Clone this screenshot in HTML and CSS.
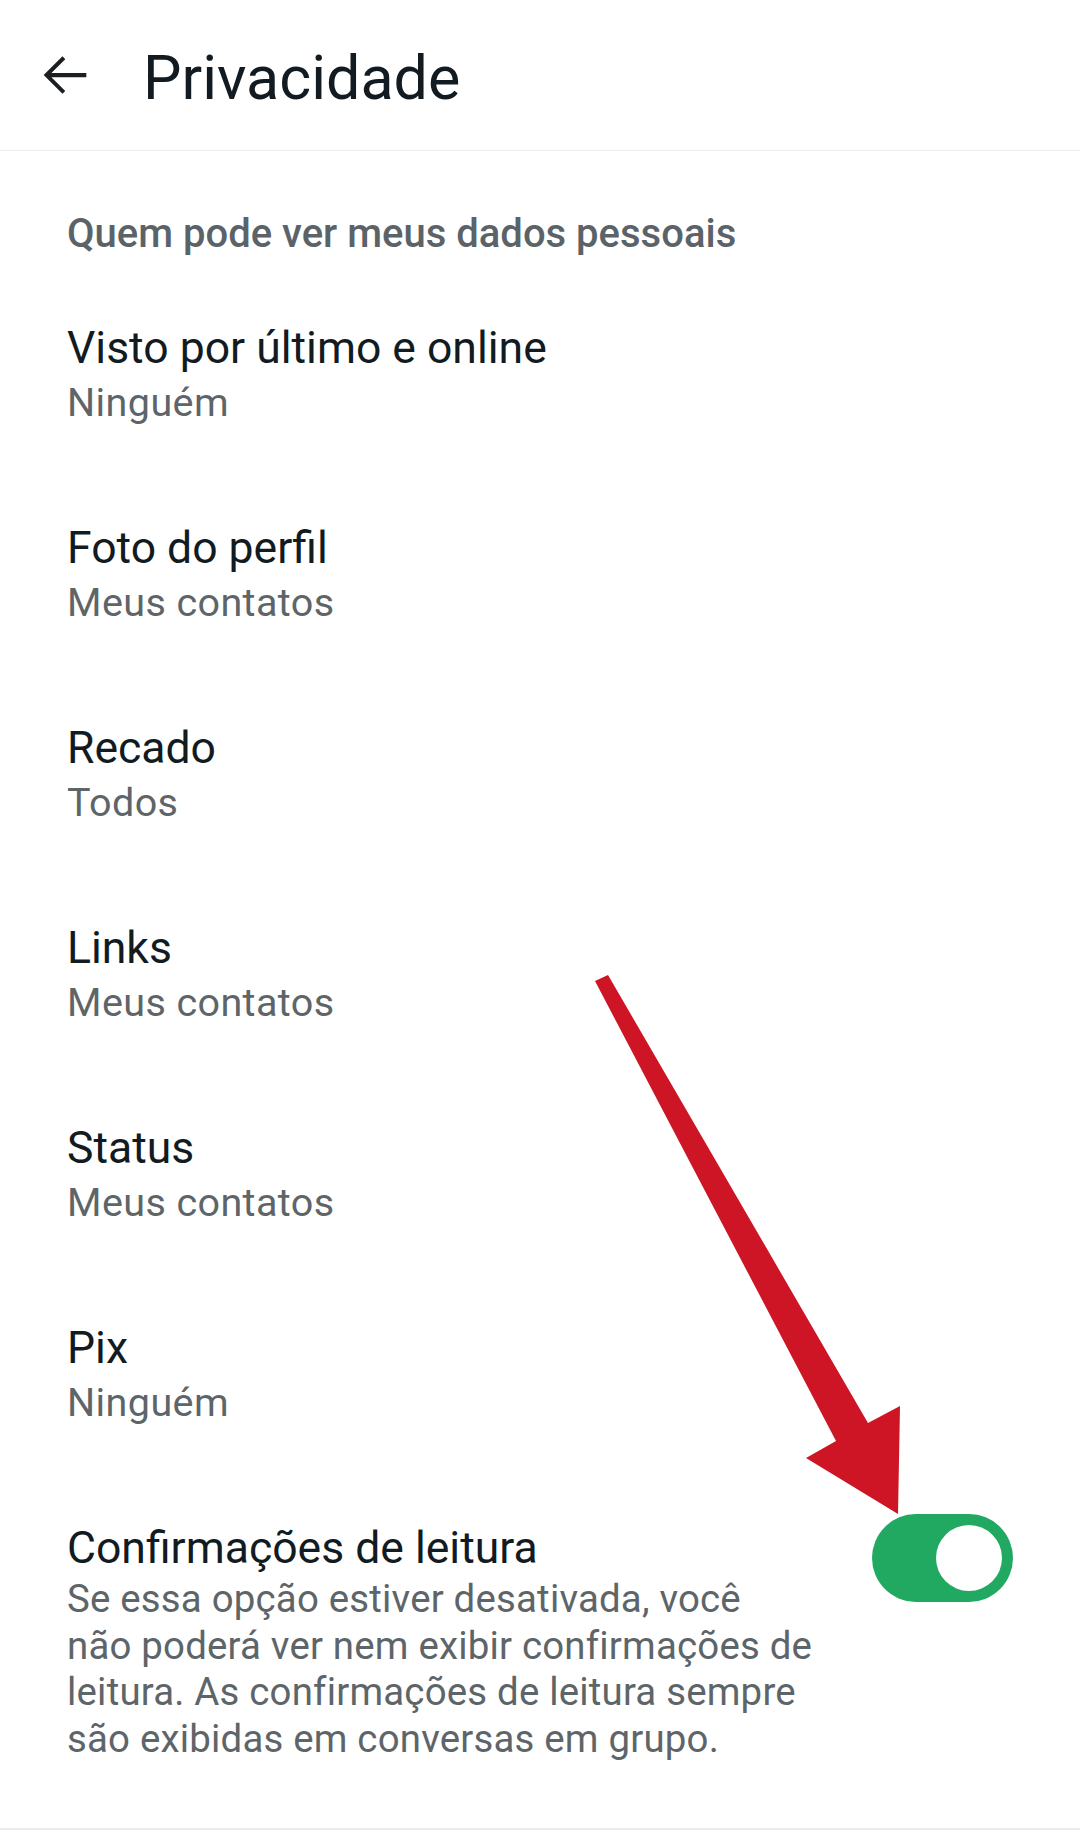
FILE: index.html
```html
<!DOCTYPE html>
<html lang="pt-BR">
<head>
<meta charset="utf-8">
<title>Privacidade</title>
<link rel="stylesheet" href="styles.css">
</head>
<body>
<div class="screen">
  <header class="appbar">
    <svg class="back" viewBox="0 0 24 24" aria-hidden="true"><path d="M20 11.25H6.9l5.2-5.2-1.05-1.05L4 12l7.05 7.05 1.05-1.05-5.2-5.2H20z"/></svg>
    <h1 class="appbar-title">Privacidade</h1>
  </header>
  <main class="content">
    <h2 class="section-title">Quem pode ver meus dados pessoais</h2>
    <div class="item"><div class="item-title">Visto por último e online</div><div class="item-sub">Ninguém</div></div>
    <div class="item"><div class="item-title">Foto do perfil</div><div class="item-sub">Meus contatos</div></div>
    <div class="item"><div class="item-title">Recado</div><div class="item-sub">Todos</div></div>
    <div class="item"><div class="item-title">Links</div><div class="item-sub">Meus contatos</div></div>
    <div class="item"><div class="item-title">Status</div><div class="item-sub">Meus contatos</div></div>
    <div class="item"><div class="item-title">Pix</div><div class="item-sub">Ninguém</div></div>
    <div class="item item-toggle">
      <div class="item-text">
        <div class="item-title">Confirmações de leitura</div>
        <div class="item-desc">Se essa opção estiver desativada, você não poderá ver nem exibir confirmações de leitura. As confirmações de leitura sempre são exibidas em conversas em grupo.</div>
      </div>
      <div class="switch"><div class="switch-thumb"></div></div>
    </div>
  </main>
  <svg class="annotation" viewBox="0 0 1080 1834" aria-hidden="true">
    <polygon points="595,981 608,975 868,1423 900,1406 898,1514 806,1458 836,1441"/>
  </svg>
</div>
</body>
</html>
```
FILE: styles.css
```css
html, body {
  margin: 0;
  padding: 0;
  background: #ffffff;
}
body {
  font-family: Roboto, "Noto Sans", "Liberation Sans", sans-serif;
  color: #111b21;
}
.screen {
  position: relative;
  width: 1080px;
  height: 1834px;
  overflow: hidden;
}
.appbar {
  box-sizing: border-box;
  height: 151px;
  padding-top: 6px;
  display: flex;
  align-items: center;
  border-bottom: 1px solid #ececec;
}
.back {
  width: 64px;
  height: 64px;
  margin-left: 33px;
  margin-top: -6px;
  fill: #1b1f22;
}
.appbar-title {
  margin: 0 0 0 46px;
  font-size: 61px;
  line-height: 70px;
  font-weight: 400;
  color: #111b21;
}
.content {
  padding: 0 67px;
}
.section-title {
  margin: 0;
  padding-top: 59px;
  padding-bottom: 18px;
  font-size: 40px;
  line-height: 48px;
  font-weight: 500;
  color: #5b6369;
}
.item {
  box-sizing: border-box;
  height: 200px;
  padding-top: 44px;
}
.item-title {
  font-size: 44.5px;
  line-height: 56px;
  color: #111b21;
}
.item-sub {
  font-size: 39.5px;
  line-height: 54px;
  color: #5e6569;
  letter-spacing: 0.4px;
}
.item-toggle {
  height: auto;
  display: flex;
  justify-content: space-between;
  align-items: flex-start;
  padding-bottom: 66px;
  border-bottom: 2px solid #ebebeb;
  margin: 0 -67px;
  padding-left: 67px;
  padding-right: 67px;
}
.item-text {
  width: 748px;
}
.item-desc {
  font-size: 38.4px;
  line-height: 46.5px;
  color: #5e6569;
  letter-spacing: 0.2px;
}
.switch {
  box-sizing: border-box;
  width: 141px;
  height: 88px;
  margin-top: -6px;
  border-radius: 44px;
  background: #21a962;
  display: flex;
  align-items: center;
  justify-content: flex-end;
  padding-right: 11px;
}
.switch-thumb {
  width: 66px;
  height: 66px;
  border-radius: 50%;
  background: #ffffff;
}
.annotation {
  position: absolute;
  left: 0;
  top: 0;
  width: 1080px;
  height: 1834px;
  fill: #cd1525;
  pointer-events: none;
}
```
